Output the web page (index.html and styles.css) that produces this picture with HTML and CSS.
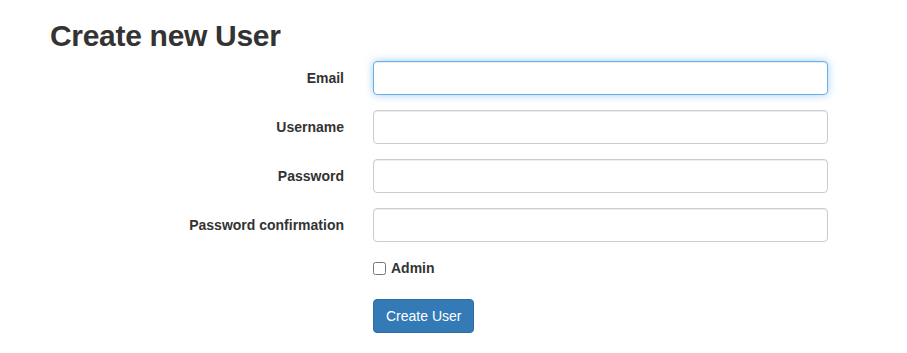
FILE: index.html
```html
<!DOCTYPE html>
<html lang="en">
<head>
  <meta charset="UTF-8" />
  <meta name="viewport" content="width=device-width, initial-scale=1.0" />
  <title>Create new User</title>
  <link rel="stylesheet" href="styles.css">
</head>
<body>
  <div class="page">
    <h2>Create new User</h2>
    <form class="user-form">
      <label class="field-label" for="email">Email</label>
      <input class="field-input focused" type="email" id="email" />

      <label class="field-label" for="username">Username</label>
      <input class="field-input" type="text" id="username" />

      <label class="field-label" for="password">Password</label>
      <input class="field-input" type="password" id="password" />

      <label class="field-label" for="password-confirmation">Password confirmation</label>
      <input class="field-input" type="password" id="password-confirmation" />

      <div class="check-row">
        <label class="check-label"><input type="checkbox" id="admin" /> Admin</label>
      </div>

      <div class="actions">
        <button type="button" class="btn">Create User</button>
      </div>
    </form>
  </div>
</body>
</html>
```

FILE: styles.css
```css
* { box-sizing: border-box; }
body {
  margin: 0;
  font-family: "Liberation Sans", Arial, sans-serif;
  font-size: 14px;
  line-height: 20px;
  color: #333;
  background: #fff;
}
.page { padding-left: 50px; }
h2 {
  margin: 19px 0 9px;
  font-size: 30px;
  line-height: 33px;
  font-weight: 700;
  letter-spacing: -0.3px;
}
.user-form {
  display: grid;
  grid-template-columns: 294px 455px;
  column-gap: 29px;
  row-gap: 15px;
  align-items: start;
}
.field-label {
  text-align: right;
  font-weight: 700;
  padding-top: 7px;
}
.field-input {
  display: block;
  width: 100%;
  height: 34px;
  padding: 6px 12px;
  font: inherit;
  color: #555;
  background: #fff;
  border: 1px solid #ccc;
  border-radius: 4px;
  box-shadow: inset 0 1px 1px rgba(0,0,0,0.075);
  outline: none;
}
.field-input.focused {
  border-color: #66afe9;
  box-shadow: inset 0 1px 1px rgba(0,0,0,0.075), 0 0 8px rgba(102,175,233,0.6);
}
.check-row {
  grid-column: 2;
  height: 27px;
  padding-top: 1px;
}
.check-label {
  display: flex;
  align-items: center;
  font-weight: 700;
}
.check-label input {
  margin: 0 5px 0 0;
  width: 13px;
  height: 13px;
}
.actions { grid-column: 2; }
.btn {
  height: 34px;
  padding: 6px 12px;
  font: inherit;
  color: #fff;
  background: #337ab7;
  border: 1px solid #2e6da4;
  border-radius: 4px;
  cursor: pointer;
}
```
